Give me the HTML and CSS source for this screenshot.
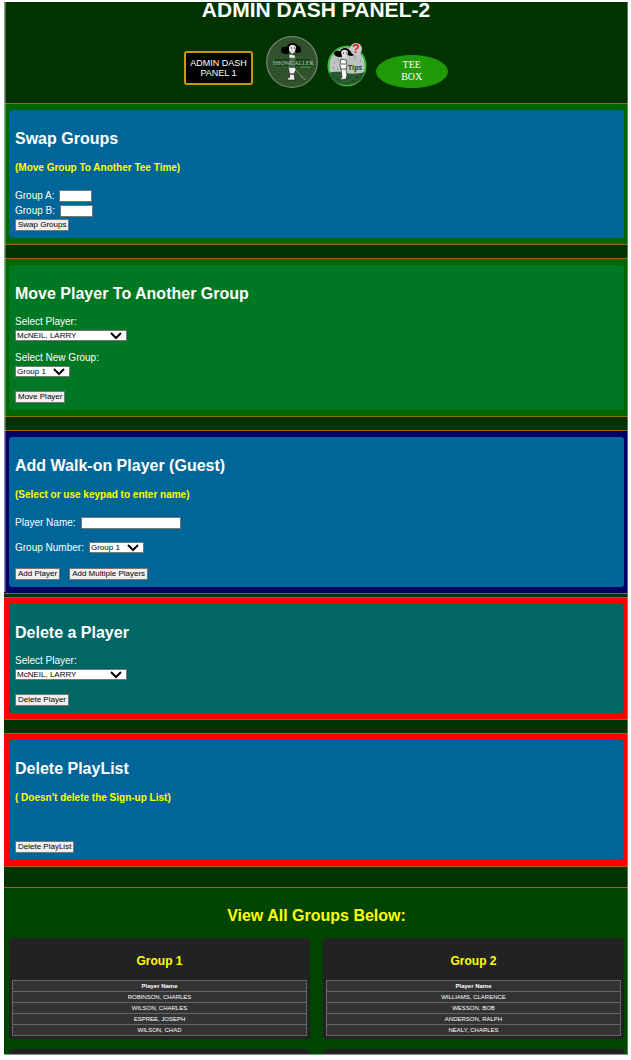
FILE: index.html
```html
<!DOCTYPE html>
<html lang="en">
<head>
  <meta charset="UTF-8">
  <meta name="viewport" content="width=device-width, initial-scale=1">
  <title>Admin Dash Panel-2</title>
  <link rel="stylesheet" href="styles.css">
</head>
<body>
  <div class="panel">
    <header>
      <h1>ADMIN DASH PANEL-2</h1>
      <nav>
        <a href="#" class="dash-link">ADMIN DASH<br>PANEL 1</a>
        <a href="#" aria-label="Showcaller">
          <svg width="52" height="52" viewBox="0 0 52 52">
            <circle cx="26" cy="26" r="25.3" fill="#30522a" stroke="#7b837b" stroke-width="1.2"/>
            <path d="M15 14c0-3 3-4 6-3 1-5 9-5 11-1 3 0 3 2 3 5-1 2-4 3-6 1h-5c-2 3-9 3-9-2z" fill="#000"/>
            <path d="M23 11c1-3 6-3 7 0l-1 5-3 2-3-3z" fill="#ddd"/>
            <path d="M25 12h1M28 12h1" stroke="#222"/>
            <path d="M23 18l6 1 1 4-1 6 1 5-2 4 1 6h-8l1-2 2-1-1-6-1-5 1-6z" fill="#f2f2f2" stroke="#111" stroke-width=".6"/>
            <path d="M23 31h6M24 38h4" stroke="#111" fill="none"/>
            <path d="M30 34l8 9h2" stroke="#999" stroke-width=".8" fill="none"/>
            <rect x="8" y="22" width="37" height="9" fill="#183e1c" fill-opacity=".75" stroke="#2d7534" stroke-width=".6"/>
            <text x="27" y="29" class="badge-text">SHOWCALLER</text>
            <path d="M35 31h9" stroke="#4caf50" stroke-width=".8"/>
          </svg>
        </a>
        <a href="#" aria-label="Tips">
          <svg width="42" height="46" viewBox="0 0 42 46">
            <ellipse cx="21" cy="24" rx="20.5" ry="21.5" fill="#051c05"/>
            <ellipse cx="21" cy="24" rx="18.6" ry="19.6" fill="#bfc3c0" stroke="#35b83c" stroke-width="2"/>
            <path d="M3 31c7-2 12-1 17 0s12 1 19-1c-2 8-9 13-18 13S5 39 3 31z" fill="#285a30"/>
            <path d="M8 21h1M7 26h1M11 27h1M29 17h1M34 19h1M28 14h1M12 18h1M28 30h1M35 24h1" stroke="#666"/>
            <path d="M10 37h3M26 39h3M29 35h3" stroke="#163a1c"/>
            <path d="M8 11c1-3 4-3 6-2 2-4 8-4 10 0 2 0 4 1 4 3-1 3-4 2-6 1l-5 1c-2 2-9 1-9-3z" fill="#000"/>
            <path d="M15 10c1-3 6-3 7 0l-1 5-3 2-2-3z" fill="#ddd"/>
            <path d="M17 11h1M20 11h1" stroke="#222"/>
            <path d="M15 17l5 1 1 5-1 5 1 5-1 4-6 1 2-3-1-7-1-5z" fill="#fff" stroke="#222" stroke-width=".7"/>
            <path d="M15 22h5M15 27h5" stroke="#222" stroke-width=".8"/>
            <text x="22" y="28" class="tips-text">Tips</text>
            <circle cx="30" cy="7" r="6" fill="#c9c9c9"/>
            <text x="30" y="11" class="mark-text">?</text>
          </svg>
        </a>
        <a href="#" class="tee-box">TEE<br>BOX</a>
      </nav>
    </header>

    <section class="band">
      <form class="card">
        <h2>Swap Groups</h2>
        <p class="note">(Move Group To Another Tee Time)</p>
        <div class="rows">
          <div class="row"><label for="group-a">Group A:</label><input type="text" id="group-a" class="short"></div>
          <div class="row"><label for="group-b">Group B:</label><input type="text" id="group-b" class="short"></div>
        </div>
        <button type="button" class="tight">Swap Groups</button>
      </form>
    </section>

    <section class="band">
      <form class="card green">
        <h2>Move Player To Another Group</h2>
        <div class="field">
          <label for="move-player">Select Player:</label>
          <select id="move-player" class="player"><option>McNEIL, LARRY</option></select>
        </div>
        <div class="field next">
          <label for="new-group">Select New Group:</label>
          <select id="new-group" class="group"><option>Group 1</option></select>
        </div>
        <button type="button">Move Player</button>
      </form>
    </section>

    <section class="band navy">
      <form class="card">
        <h2>Add Walk-on Player (Guest)</h2>
        <p class="note">(Select or use keypad to enter name)</p>
        <div class="rows spaced">
          <div class="row"><label for="player-name">Player Name:</label><input type="text" id="player-name" class="long"></div>
          <div class="row">
            <label for="group-number">Group Number:</label>
            <select id="group-number" class="group"><option>Group 1</option></select>
          </div>
        </div>
        <div class="actions">
          <button type="button">Add Player</button>
          <button type="button">Add Multiple Players</button>
        </div>
      </form>
    </section>

    <section class="band danger">
      <form class="card teal">
        <h2>Delete a Player</h2>
        <div class="field">
          <label for="delete-player">Select Player:</label>
          <select id="delete-player" class="player"><option>McNEIL, LARRY</option></select>
        </div>
        <button type="button">Delete Player</button>
      </form>
    </section>

    <section class="band danger">
      <form class="card">
        <h2>Delete PlayList</h2>
        <p class="note">( Doesn't delete the Sign-up List)</p>
        <button type="button" class="low">Delete PlayList</button>
      </form>
    </section>

    <section class="groups">
      <h2>View All Groups Below:</h2>
      <div class="group-grid">
        <div class="group-card">
          <h3>Group 1</h3>
          <table>
            <thead><tr><th>Player Name</th></tr></thead>
            <tbody>
              <tr><td>ROBINSON, CHARLES</td></tr>
              <tr><td>WILSON, CHARLES</td></tr>
              <tr><td>ESPREE, JOSEPH</td></tr>
              <tr><td>WILSON, CHAD</td></tr>
            </tbody>
          </table>
        </div>
        <div class="group-card">
          <h3>Group 2</h3>
          <table>
            <thead><tr><th>Player Name</th></tr></thead>
            <tbody>
              <tr><td>WILLIAMS, CLARENCE</td></tr>
              <tr><td>WESSON, BOB</td></tr>
              <tr><td>ANDERSON, RALPH</td></tr>
              <tr><td>NEALY, CHARLES</td></tr>
            </tbody>
          </table>
        </div>
        <div class="group-card"></div>
        <div class="group-card"></div>
      </div>
    </section>
  </div>
</body>
</html>
```
FILE: styles.css
```css
:root {
  --dark: #003300;
  --line: #996600;
  --blue: #006699;
  --note: #ffff00;
}
* { box-sizing: border-box; margin: 0; padding: 0; }
body {
  font-family: Arial, "Liberation Sans", sans-serif;
  font-size: 10px;
  line-height: 12px;
  background: #fff;
  color: #fff;
}
.panel {
  position: relative;
  height: calc(100vh - 7px);
  margin: 2px 3px 5px 4px;
  background: var(--dark);
  overflow: hidden;
}
/* worn edges of the panel */
.panel::before {
  content: "";
  position: absolute;
  top: 0;
  left: 0;
  width: 2px;
  height: 56%;
  background: linear-gradient(to right, rgba(255,255,255,0.65), rgba(255,255,255,0.15));
}
.panel::after {
  content: "";
  position: absolute;
  inset: 0;
  border-right: 1px solid rgba(255,255,255,0.35);
  border-bottom: 1px solid rgba(255,255,255,0.5);
  pointer-events: none;
}
header { padding-bottom: 15px; text-align: center; }
h1 {
  font-size: 21px;
  line-height: 16px;
}
nav {
  display: flex;
  justify-content: center;
  align-items: flex-end;
  gap: 8px;
  margin-top: 18px;
}
nav a { color: #fff; text-decoration: none; }
nav svg { display: block; }
.dash-link {
  margin: 0 5px 3px 0;
  padding: 5px 4px;
  font-size: 9px;
  line-height: 10px;
  background: #000;
  border: 2px solid #c79a0a;
  border-radius: 3px;
}
.tee-box {
  width: 72px;
  padding: 4px 0 5px;
  font-family: "Liberation Serif", serif;
  font-size: 10px;
  line-height: 12px;
  background: #219a07;
  border-radius: 50%;
}
.badge-text { font: 6px "Liberation Serif", serif; fill: #b5c5b0; text-anchor: middle; }
.tips-text { font: bold 7px "Open Sans", sans-serif; fill: #174d20; }
.mark-text { font: bold 12px "Liberation Sans", sans-serif; fill: #e3172b; text-anchor: middle; }

.band {
  margin-bottom: 13px;
  padding: 6px 4px 6px 5px;
  background: #006600;
  border-top: 1px solid var(--line);
  border-bottom: 1px solid var(--line);
}
.band.navy { margin-bottom: 3px; background: #000066; }
.band.danger { position: relative; background: #ff0000; }
.card {
  padding: 20px 6px 7px;
  background: var(--blue);
  border-radius: 3px;
}
.card.green { background: #007722; }
.card.teal { background: #006666; }
h2 { font-size: 16px; line-height: 18px; }
.note {
  margin-top: 14px;
  font-weight: bold;
  color: var(--note);
}
.rows { display: flex; flex-direction: column; margin-top: 14px; }
.rows.spaced { gap: 10px; }
.row { display: flex; align-items: center; gap: 5px; height: 15px; }
.field { display: flex; flex-direction: column; align-items: flex-start; gap: 2px; margin-top: 13px; }
.field.next { margin-top: 11px; }
input, select, button {
  display: block;
  font-family: inherit;
  font-size: 8px;
  border: 1px solid #767676;
  border-radius: 0;
}
input { height: 12px; background: #fff; }
.short { width: 33px; }
.long { width: 100px; }
select {
  appearance: none;
  height: 11px;
  padding-left: 1px;
  line-height: 9px;
  color: #000;
  background: #fff url("data:image/svg+xml,%3Csvg xmlns='http://www.w3.org/2000/svg' viewBox='0 0 12 8'%3E%3Cpath d='M1 1l5 5 5-5' fill='none' stroke='%23000' stroke-width='2'/%3E%3C/svg%3E") no-repeat right 4px center / 12px 8px;
}
.player { width: 112px; }
.group { width: 55px; }
button {
  margin-top: 14px;
  padding: 0 2px;
  line-height: 10px;
  color: #000;
  background: #efefef;
}
button.tight { margin-top: 1px; }
button.low { margin-top: 37px; }
.actions { display: flex; gap: 9px; margin-top: 13px; }
.actions button { margin-top: 0; }

.groups {
  margin-top: 20px;
  padding: 19px 4px 18px 5px;
  background: #004400;
  border-top: 1px solid var(--line);
  text-align: center;
  color: var(--note);
}
.group-grid {
  display: grid;
  grid-template-columns: 1fr 1fr;
  gap: 10px 13px;
  margin-top: 13px;
}
.group-card {
  min-height: 30px;
  padding: 0 3px 3px;
  background: #222;
  border-radius: 4px;
}
h3 { padding: 16px 0 12px; font-size: 12px; line-height: 14px; }
table {
  width: 100%;
  border-collapse: collapse;
  font-size: 6px;
  line-height: 10px;
  color: #fff;
}
th, td { background: #333; border: 1px solid #666; text-align: center; }
```
